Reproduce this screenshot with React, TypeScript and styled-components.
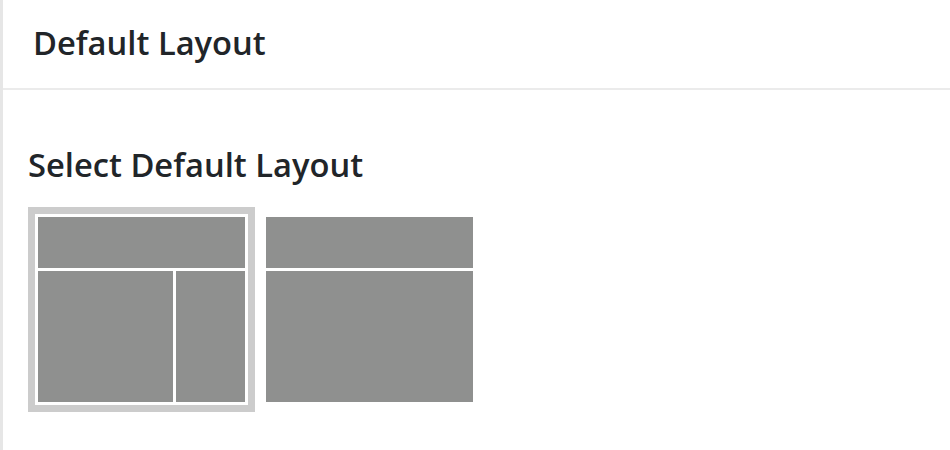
import { useState } from "react";
import { createGlobalStyle, styled } from "styled-components";

const GlobalStyle = createGlobalStyle`
  html, body {
    margin: 0;
    padding: 0;
    background: #ffffff;
  }
  body {
    font-family: "Open Sans", "Noto Sans", "Liberation Sans", sans-serif;
    color: #212529;
  }
`;

type LayoutKind = "sidebar" | "full";

const LAYOUTS: LayoutKind[] = ["sidebar", "full"];

const LayoutThumb = ({
  kind,
  selected,
  onClick,
}: {
  kind: LayoutKind;
  selected: boolean;
  onClick: () => void;
}) => {
  return (
    <ThumbButton $selected={selected} onClick={onClick} aria-label={kind}>
      <ThumbGrid $kind={kind}>
        <Block $area="head" />
        <Block $area="main" />
        {kind === "sidebar" ? <Block $area="side" /> : <></>}
      </ThumbGrid>
    </ThumbButton>
  );
};

export default function App() {
  const [layout, setLayout] = useState<LayoutKind>("sidebar");

  return (
    <>
      <GlobalStyle />
      <Panel>
        <PanelHeader>
          <HeaderTitle>Default Layout</HeaderTitle>
        </PanelHeader>
        <PanelBody>
          <SectionTitle>Select Default Layout</SectionTitle>
          <ThumbRow>
            {LAYOUTS.map((kind) => (
              <LayoutThumb
                key={kind}
                kind={kind}
                selected={layout === kind}
                onClick={() => setLayout(kind)}
              />
            ))}
          </ThumbRow>
        </PanelBody>
      </Panel>
    </>
  );
}

const Panel = styled.div`
  width: 950px;
  height: 450px;
  box-sizing: border-box;
  border-left: 3px solid #e6e6e6;
  background: #ffffff;
  overflow: hidden;
`;

const PanelHeader = styled.div`
  height: 90px;
  box-sizing: border-box;
  border-bottom: 2px solid #ebebeb;
  display: flex;
  align-items: center;
  padding: 0 0 4px 30px;
`;

const HeaderTitle = styled.h2`
  margin: 0;
  font-size: 32.7px;
  font-weight: 600;
  line-height: 33px;
`;

const PanelBody = styled.div`
  padding: 58px 0 0 25px;
`;

const SectionTitle = styled.h3`
  margin: 0 0 26px 0;
  font-size: 32.7px;
  font-weight: 600;
  line-height: 33px;
`;

const ThumbRow = styled.div`
  display: flex;
  gap: 1px;
`;

const ThumbButton = styled.button<{ $selected: boolean }>`
  width: 227px;
  height: 205px;
  box-sizing: border-box;
  padding: 3px;
  margin: 0;
  border: 7px solid ${(p) => (p.$selected ? "#cccccc" : "transparent")};
  background: #ffffff;
  cursor: pointer;
  display: flex;
`;

const ThumbGrid = styled.div<{ $kind: LayoutKind }>`
  flex: 1;
  display: grid;
  gap: 3px;
  grid-template-rows: 51px 1fr;
  grid-template-columns: ${(p) => (p.$kind === "sidebar" ? "135px 1fr" : "1fr")};
  grid-template-areas: ${(p) =>
    p.$kind === "sidebar" ? `"head head" "main side"` : `"head" "main"`};
`;

const Block = styled.div<{ $area: string }>`
  grid-area: ${(p) => p.$area};
  background: #8f908f;
`;
